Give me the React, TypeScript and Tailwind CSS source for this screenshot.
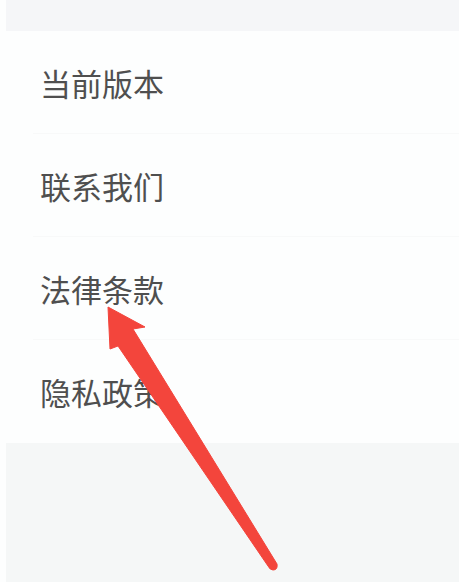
const items = ["当前版本", "联系我们", "法律条款", "隐私政策"];

function Arrow() {
  return (
    <svg
      className="pointer-events-none absolute left-0 top-0"
      width="459"
      height="582"
      viewBox="0 0 459 582"
    >
      <path
        d="M108 307 L145 327 L133 329 L277 564 Q278 570 273 570 Q270 570 268 566 L118 346 L110 349 Z"
        fill="#f3453c"
        stroke="#f3453c"
        strokeWidth="1"
        strokeLinejoin="round"
      />
    </svg>
  );
}

export default function App() {
  return (
    <div
      className="relative flex h-[582px] w-[459px] flex-col overflow-hidden bg-[#fdfefe]"
      style={{ fontFamily: '"Noto Sans CJK SC", "Noto Sans", sans-serif' }}
    >
      <div className="ml-[6px] h-[31px] shrink-0 bg-[#f5f6f8]" />

      <ul className="flex flex-col">
        {items.map((label, i) => (
          <li key={label} className="flex h-[103px] flex-col">
            <div className="flex flex-1 items-center pl-[40px]">
              <span className="text-[31px] leading-none text-[#4f4f4f]">{label}</span>
            </div>
            {i < items.length - 1 && <div className="ml-[33px] h-px bg-[#f8f9f9]" />}
          </li>
        ))}
      </ul>

      <div className="ml-[6px] flex-1 bg-[#f5f7f7]" />

      <Arrow />
    </div>
  );
}
